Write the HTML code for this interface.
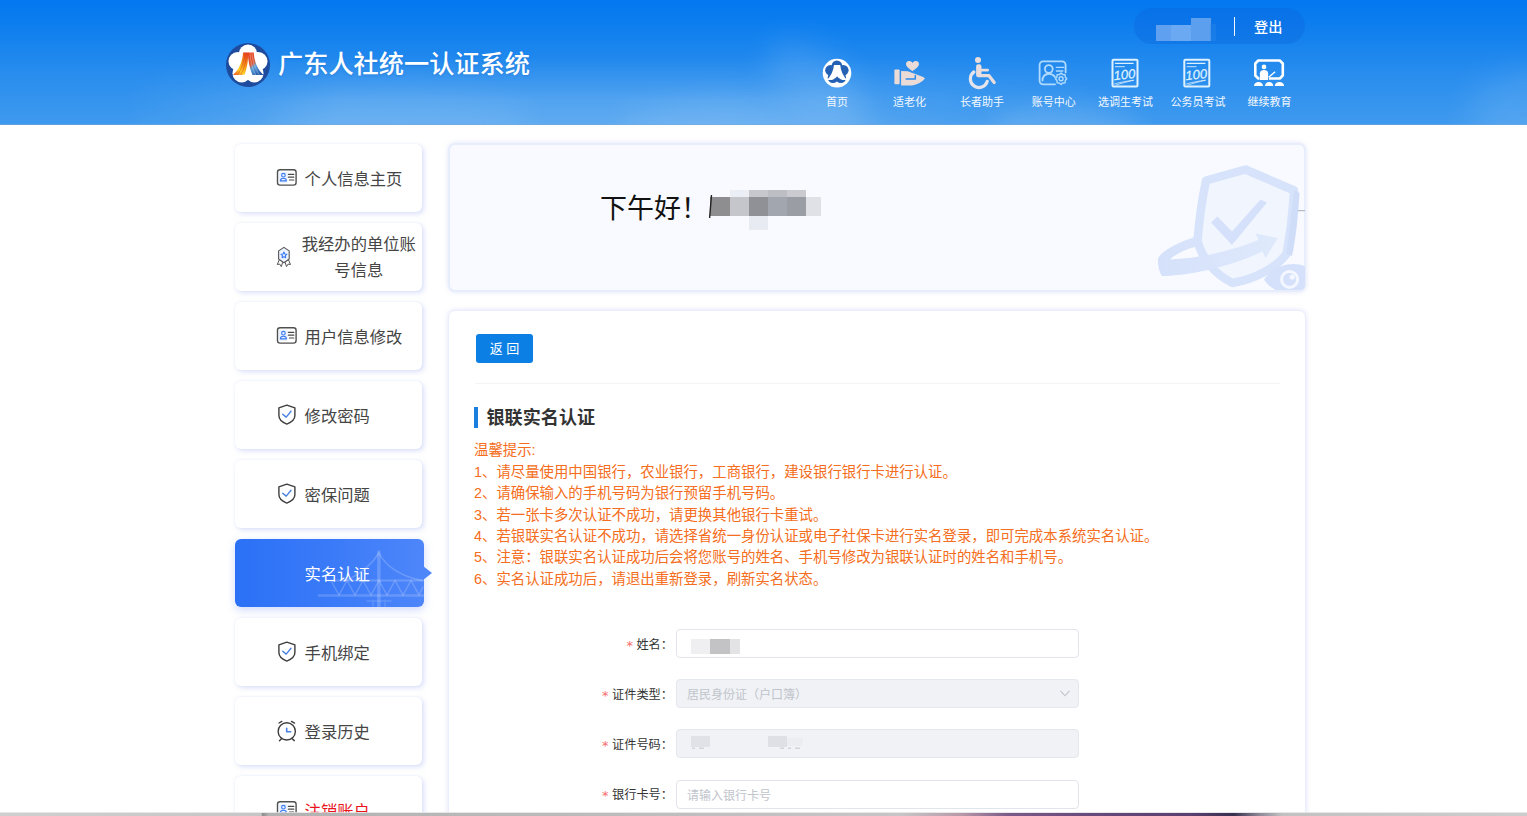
<!DOCTYPE html>
<html lang="zh-CN">
<head>
<meta charset="utf-8">
<title>广东人社统一认证系统</title>
<style>
*{box-sizing:border-box;margin:0;padding:0}
html,body{width:1527px;height:816px;overflow:hidden;background:#fff}
body{font-family:"Liberation Sans","Noto Sans CJK SC",sans-serif;color:#333;position:relative}
.abs{position:absolute}
/* header */
#hd{position:absolute;left:0;top:0;width:1527px;height:125px;overflow:hidden;
 background:linear-gradient(180deg,#0277f0 0%,#1482ee 30%,#2a8eee 62%,#3f9aee 100%)}
#hd .cloud{position:absolute;border-radius:50%;filter:blur(18px);background:#fff}
#logo{position:absolute;left:226px;top:43px;width:44px;height:44px}
#title{position:absolute;left:278px;top:46.300px;font-size:25.2px;line-height:36px;color:#fff;white-space:nowrap;letter-spacing:0;font-weight:500;text-shadow:0 1px 2px rgba(20,80,170,.25)}
#pill{position:absolute;left:1134px;top:8px;width:171px;height:36px;border-radius:18px;background:rgba(12,100,220,.36)}
#pill .sep{position:absolute;left:99.800px;top:8.5px;width:1.200px;height:19px;background:#fff;opacity:.95}
#pill .out{position:absolute;left:120px;top:8.500px;font-size:14.200px;line-height:20px;color:#fff;font-weight:500}
.mz{position:absolute}
.nl{position:absolute;top:94px;width:80px;text-align:center;font-size:11px;line-height:16px;color:#f4f8fe;white-space:nowrap}
.nav{position:absolute;top:56px;width:72px;height:60px;text-align:center}
.nav svg{position:absolute;left:20px;top:1px;width:32px;height:32px;overflow:visible}
.nav span{position:absolute;left:-10px;right:-10px;top:38px;font-size:11px;line-height:16px;color:#fff;white-space:nowrap}
/* sidebar */
.sc{position:absolute;left:235px;width:187px;height:68px;background:#fff;border-radius:6px;
 box-shadow:2px 2px 5px rgba(185,198,245,.5),0 0 2px rgba(220,226,250,.5);font-size:16.300px;color:#454545}
.sc .t{position:absolute;left:69.600px;top:22.800px;line-height:24px;white-space:nowrap}
.sc svg{position:absolute;left:0;top:0;width:188px;height:68px;overflow:visible}
.sc .t2{position:absolute;left:62.800px;top:7.900px;width:122px;text-align:center;line-height:26.500px;white-space:nowrap}
.sc.red .t{color:#e8141a}
.sc .tip{position:absolute;left:188.300px;top:26.500px;width:0;height:0;border-left:9px solid #4e86fa;border-top:7.500px solid transparent;border-bottom:7.500px solid transparent}
.sc.act{width:188.500px;background:linear-gradient(90deg,#2b71f6 0%,#3a7af8 50%,#4e86fa 100%);color:#fff;box-shadow:0 3px 8px rgba(120,150,240,.35)}
/* main */
#greet{position:absolute;left:448px;top:143px;width:858px;height:149px;background:#f8faff;border:2px solid #e8edfb;border-radius:7px;overflow:hidden;box-shadow:0 0 5px rgba(195,206,248,.5)}
#greet .g{position:absolute;left:150px;top:44px;font-size:27px;line-height:40px;color:#111;white-space:nowrap}
#panel{position:absolute;left:448px;top:310px;width:858px;height:520px;background:#fff;border:1.500px solid #eaeefc;border-radius:7px;box-shadow:0 0 5px rgba(195,206,248,.5)}
#back{position:absolute;left:476px;top:334px;width:57px;height:29px;border-radius:3px;background:#0b7fe4;color:#fff;font-size:13px;line-height:29px;text-align:center}
#hr{position:absolute;left:475px;top:383px;width:805px;height:1px;background:#f4f4f6}
#bar{position:absolute;left:474px;top:407px;width:4px;height:21px;background:#1b7fe0}
#h2{position:absolute;left:486.500px;top:404.600px;font-size:18.100px;line-height:27px;font-weight:700;color:#333;white-space:nowrap}
#tips{position:absolute;left:474px;top:440.200px;font-size:14.400px;line-height:21.43px;color:#f46d20;white-space:nowrap}
.lb{position:absolute;width:120px;text-align:right;font-size:12.200px;line-height:28px;color:#333;white-space:nowrap}
.lb i{font-style:normal;color:#f56c6c;margin-right:3.500px;font-family:'DejaVu Sans',sans-serif;font-size:13px;position:relative;top:1.600px}
.ip{position:absolute;left:676px;width:403px;height:29px;border:1px solid #e1e4eb;border-radius:4px;background:#fff;font-size:12px;line-height:30px;color:#c0c4cc;padding-left:10px;white-space:nowrap}
.ip.dis{background:#f0f2f5;border-color:#e4e7ed}
#strip{position:absolute;left:0;top:812.700px;width:1527px;height:3.300px;
 background:linear-gradient(90deg,#cfcfcf 0%,#c6c6c6 17.1%,#8c8c8c 17.2%,#b2b2b2 17.600%,#bcbcbc 40%,#c6c6c6 59%,#b898a8 63%,#7a5a88 66%,#66487a 72%,#5a4070 78%,#38304e 80.800%,#8e8a98 82.500%,#c2c2c2 84%,#cdcdcd 100%);box-shadow:0 -1px 0 rgba(225,225,228,.8)}
</style>
</head>
<body>
<div id="hd">
  <div style="position:absolute;left:120px;top:55px;width:1000px;height:70px;background:linear-gradient(180deg,rgba(255,255,255,0) 0%,rgba(255,255,255,.07) 35%,rgba(255,255,255,.15) 65%,rgba(255,255,255,.17) 100%);-webkit-mask-image:linear-gradient(90deg,transparent 0%,#000 22%,#000 60%,transparent 100%);mask-image:linear-gradient(90deg,transparent 0%,#000 22%,#000 60%,transparent 100%)"></div>
  <div class="cloud" style="left:270px;top:92px;width:260px;height:60px;opacity:.07;filter:blur(14px)"></div>
  <div class="cloud" style="left:620px;top:100px;width:260px;height:60px;opacity:.10;filter:blur(14px)"></div>
  <div class="cloud" style="left:760px;top:50px;width:110px;height:60px;opacity:.10;filter:blur(14px);transform:rotate(35deg)"></div>
  <div class="cloud" style="left:990px;top:105px;width:150px;height:50px;opacity:.13;filter:blur(12px)"></div>
  <div class="cloud" style="left:1470px;top:70px;width:120px;height:90px;opacity:.10;filter:blur(16px)"></div>
  <div style="position:absolute;left:0;top:124px;width:1527px;height:1px;background:rgba(120,165,215,.55)"></div>
</div>
<svg id="logo" viewBox="0 0 44 44">
<defs>
<linearGradient id="lg1" x1="0.9" y1="0" x2="0.1" y2="1"><stop offset="0" stop-color="#e8421c"/><stop offset=".45" stop-color="#f7a11a"/><stop offset=".7" stop-color="#ffd42a"/><stop offset="1" stop-color="#f0541c"/></linearGradient>
<linearGradient id="lg2" x1="0.2" y1="0" x2="0.8" y2="1"><stop offset="0" stop-color="#e8421c"/><stop offset=".4" stop-color="#d85a3a"/><stop offset=".55" stop-color="#5ba0d8"/><stop offset="1" stop-color="#1c4fa4"/></linearGradient>
</defs>
<circle cx="22" cy="22" r="22" fill="#1e4b9d"/>
<g fill="#fff"><circle cx="22.0" cy="10.8" r="9.200"/><circle cx="32.3" cy="18.3" r="9.200"/><circle cx="28.3" cy="30.3" r="9.200"/><circle cx="15.7" cy="30.3" r="9.200"/><circle cx="11.7" cy="18.3" r="9.200"/><circle cx="22" cy="22" r="9"/></g>
<path d="M17 9.6 H22.2 C22.4 16 21.5 24 18.6 31.8 L7 32 C13 27 16.8 18 17 9.6Z" fill="url(#lg1)"/>
<path d="M20.3 9.6C20.3 17 18.5 25 14.8 31.9M18.7 9.6C18.5 17 16.2 25 11.6 31.9" fill="none" stroke="#d9341a" stroke-opacity=".55" stroke-width=".9"/>
<path d="M21.9 9.6 H27.8 C28 18 31.5 26.5 37.6 32 L26.4 32 C23.4 25 22 17 21.9 9.6Z" fill="url(#lg2)"/>
<path d="M24 9.600C24.200 17 26 25 29.600 32M26 9.600C26.300 17 28.800 25 33.400 32" fill="none" stroke="#fff" stroke-opacity=".38" stroke-width=".8"/>
</svg>
<svg id="navsvg" width="1527" height="125" viewBox="0 0 1527 125" style="position:absolute;left:0;top:0">
<!-- home -->
<circle cx="837" cy="73.1" r="14.3" fill="#fff"/>
<g fill="#2460b4"><circle cx="836.9" cy="65.7" r="5.3"/><circle cx="843.3" cy="70.3" r="5.3"/><circle cx="840.8" cy="77.8" r="5.3"/><circle cx="833.0" cy="77.8" r="5.3"/><circle cx="830.5" cy="70.3" r="5.3"/><circle cx="836.9" cy="72.8" r="5"/></g>
<path d="M834 64.9H840.2C840.8 70.5 843.2 76 846.9 80H842.3C840 79 838.2 77.800 837.1 76.2C836 77.800 834.2 79 832 80H827.1C830.8 76 833.4 70.5 834 64.9Z" fill="#fff"/>
<!-- elder friendly -->
<g fill="#eadbd6">
<path d="M912.5 71.3c-1.600-1.500-6.500-4-6.500-7.200c0-3.500 4.500-4 6.500-1.100c2-2.900 6.500-2.400 6.500 1.100c0 3.200-4.900 5.700-6.500 7.200z"/>
<rect x="894.4" y="69.4" width="5.2" height="14.8" rx=".9"/>
<path d="M901.1 70.9L907.5 71.3C910 71.800 912 73.1 914 73.600L918.500 75.2C921 76 923.5 77 925.1 78.3C922.5 82 916.500 85.4 911 85.4H901.1Z"/>
</g>
<path d="M906.200 79H915.300V75.600" fill="none" stroke="#2f8cec" stroke-width="1.500" stroke-linejoin="round" stroke-linecap="round"/>
<!-- wheelchair -->
<g fill="#e9dedd" stroke="none">
<circle cx="978" cy="60" r="3"/>
<rect x="976.1" y="64.3" width="5.400" height="12.900" rx="2.200"/>
<rect x="980" y="68.7" width="9" height="2.700" rx="1.300"/>
</g>
<g fill="none" stroke="#e9dedd" stroke-linecap="round" stroke-linejoin="round">
<path d="M979.500 75.700H989L994.200 82.500" stroke-width="3.200"/>
<path d="M973.9 71.850A8.650 8.650 0 1 0 987.3 81.3" stroke-width="3.200" stroke="#e4e4ec"/>
</g>
<!-- account center -->
<g fill="none" stroke="#b0dbfe" stroke-width="1.800" stroke-linecap="round" stroke-linejoin="round">
<path d="M1065.600 72.400V64.900a3.500 3.500 0 0 0-3.500-3.500H1043.100a3.500 3.500 0 0 0-3.500 3.500V80.800a3.500 3.500 0 0 0 3.500 3.500H1055"/>
<circle cx="1048.800" cy="69" r="3.900"/>
<path d="M1042.500 80.600C1042.500 72.500 1052 72.300 1055 77"/>
<path d="M1056.400 67.400H1063.800M1056.400 71H1062.800" stroke-width="1.300"/>
<circle cx="1061.100" cy="78.800" r="2" stroke-width="1.400"/>
<path d="M1061.10 73.10 L1062.82 74.64 L1065.13 74.77 L1065.26 77.08 L1066.80 78.80 L1065.26 80.52 L1065.13 82.83 L1062.82 82.96 L1061.10 84.50 L1059.38 82.96 L1057.07 82.83 L1056.94 80.52 L1055.40 78.80 L1056.94 77.08 L1057.07 74.77 L1059.38 74.64Z" stroke-width="1.400"/>
</g>
<g transform="translate(1111.5,0)" stroke="#def1ff" fill="none" stroke-linecap="round">
<rect x="1" y="59.7" width="25" height="26.8" rx="1" stroke-width="2"/>
<path d="M3.9 63.3H21.6" stroke-width="1.3"/><path d="M3.9 66.7H12.8" stroke-width=".9"/>
<path d="M2.8 84C9 82.2 16 81 22.4 80.2C16 81.6 9 83.4 4.5 85.2" stroke-width=".9" opacity=".85"/>
<text x="1.800" y="79.300" transform="rotate(-6 12 74)" font-family="Liberation Sans, sans-serif" font-size="13.2" font-style="italic" fill="#def1ff" stroke="#def1ff" stroke-width=".25" textLength="22" lengthAdjust="spacingAndGlyphs">100</text>
</g>
<g transform="translate(1183.3,0)" stroke="#def1ff" fill="none" stroke-linecap="round">
<rect x="1" y="59.7" width="25" height="26.8" rx="1" stroke-width="2"/>
<path d="M3.9 63.3H21.6" stroke-width="1.3"/><path d="M3.9 66.7H12.8" stroke-width=".9"/>
<path d="M2.8 84C9 82.2 16 81 22.4 80.2C16 81.6 9 83.4 4.5 85.2" stroke-width=".9" opacity=".85"/>
<text x="1.800" y="79.300" transform="rotate(-6 12 74)" font-family="Liberation Sans, sans-serif" font-size="13.2" font-style="italic" fill="#def1ff" stroke="#def1ff" stroke-width=".25" textLength="22" lengthAdjust="spacingAndGlyphs">100</text>
</g>
<!-- continuing education -->
<g fill="none" stroke="#fff" stroke-width="2.600" stroke-linejoin="round">
<path d="M1259.500 78.500H1258.300L1255.300 75.500V63.500L1258.300 60.500H1279.800L1282.800 63.500V75.500L1279.800 78.500H1269"/>
</g>
<g fill="#fff" stroke="none">
<circle cx="1264" cy="66.900" r="2.350"/>
<path d="M1259.900 80.100V73.200c0-4.400 8.200-4.400 8.200 0V80.100z"/>
<path d="M1268.200 76.700L1274.700 71.300L1275.600 72.300L1269.100 77.700z"/>
<path d="M1254 86c0-5.400 9-5.400 9 0zM1265 86c0-5.400 8.200-5.400 8.200 0zM1274.800 86c0-5.400 9.300-5.400 9.300 0z"/>
</g>
</svg>
<div class="nl" style="left:797px">首页</div>
<div class="nl" style="left:869.5px">适老化</div>
<div class="nl" style="left:942px">长者助手</div>
<div class="nl" style="left:1013.7px">账号中心</div>
<div class="nl" style="left:1085.6px">选调生考试</div>
<div class="nl" style="left:1158px">公务员考试</div>
<div class="nl" style="left:1229.5px">继续教育</div>
<div id="title">广东人社统一认证系统</div>
<div id="pill"><div class="sep"></div><div class="out">登出</div></div>
<div class="mz" style="left:1156px;top:24.500px;width:15px;height:16.500px;background:#5fa1f0"></div>
<div class="mz" style="left:1171px;top:24.500px;width:20px;height:16.500px;background:#6ba9f2"></div>
<div class="mz" style="left:1191px;top:18px;width:19.500px;height:23px;background:#5c9fef"></div>
<div class="mz" style="left:1210px;top:24px;width:6px;height:17px;background:#2a8aec;opacity:.35"></div>

<div class="sc " style="top:144px"><svg viewBox="0 0 188 68"><g fill="none" stroke-linecap="round" stroke-linejoin="round">
<rect x="42.500" y="25.700" width="18.600" height="15.400" rx="2.600" stroke="#505050" stroke-width="1.400" fill="#fff"/><rect x="44" y="28" width="8.500" height="10.800" fill="#eaf2ff" stroke="none"/>
<path d="M53.400 30.400H58.800M53.400 33.200H58.800M54.400 36H58.800" stroke="#4a4a4a" stroke-width="1.200"/>
<circle cx="48.400" cy="31.200" r="1.800" stroke="#3a7bf0" stroke-width="1.100"/>
<path d="M45.400 36.900C45.400 33.300 51.400 33.300 51.400 36.900Z" stroke="#3a7bf0" stroke-width="1.100"/>
</g></svg><div class="t">个人信息主页</div></div>
<div class="sc" style="top:223px"><svg viewBox="0 0 188 68"><g fill="none" stroke-linecap="round" stroke-linejoin="round">
<path d="M48.900 24.400L54.200 27.900V36L48.900 39.700L43.600 36V27.900Z" stroke="#555" stroke-width="1.100" fill="#edf4ff"/>
<path d="M44.200 37L42.300 41.500L44.700 41.100L46.300 43.600L47.600 39.600M53.600 37L55.500 41.500L53.100 41.100L51.500 43.600L50.200 39.600" stroke="#555" stroke-width="1"/>
<path d="M48.900 29.100l.9 1.900 2 .3-1.500 1.400.4 2-1.800-1-1.800 1 .4-2-1.500-1.400 2-.3z" stroke="#3a7bf0" stroke-width="1.100"/>
</g></svg><div class="t2">我经办的单位账<br>号信息</div></div>
<div class="sc " style="top:302px"><svg viewBox="0 0 188 68"><g fill="none" stroke-linecap="round" stroke-linejoin="round">
<rect x="42.500" y="25.700" width="18.600" height="15.400" rx="2.600" stroke="#505050" stroke-width="1.400" fill="#fff"/><rect x="44" y="28" width="8.500" height="10.800" fill="#eaf2ff" stroke="none"/>
<path d="M53.400 30.400H58.800M53.400 33.200H58.800M54.400 36H58.800" stroke="#4a4a4a" stroke-width="1.200"/>
<circle cx="48.400" cy="31.200" r="1.800" stroke="#3a7bf0" stroke-width="1.100"/>
<path d="M45.400 36.900C45.400 33.300 51.400 33.300 51.400 36.900Z" stroke="#3a7bf0" stroke-width="1.100"/>
</g></svg><div class="t">用户信息修改</div></div>
<div class="sc " style="top:381px"><svg viewBox="0 0 188 68"><g fill="none" stroke-linecap="round" stroke-linejoin="round">
<path d="M51.800 24.100L59.900 26.900V34.600C59.900 38.600 56.200 41.500 51.800 43.100C47.400 41.500 43.900 38.600 43.900 34.600V26.900Z" stroke="#3d3d3d" stroke-width="1.400"/>
<path d="M47.700 33.200L51.200 36.100L56 30.300" stroke="#4a80e4" stroke-width="1.400"/>
</g></svg><div class="t">修改密码</div></div>
<div class="sc " style="top:460px"><svg viewBox="0 0 188 68"><g fill="none" stroke-linecap="round" stroke-linejoin="round">
<path d="M51.800 24.100L59.900 26.900V34.600C59.900 38.600 56.200 41.500 51.800 43.100C47.400 41.500 43.900 38.600 43.900 34.600V26.900Z" stroke="#3d3d3d" stroke-width="1.400"/>
<path d="M47.700 33.200L51.200 36.100L56 30.300" stroke="#4a80e4" stroke-width="1.400"/>
</g></svg><div class="t">密保问题</div></div>
<div class="sc act" style="top:539px"><svg viewBox="0 0 188 68"><g fill="none" stroke="#fff" stroke-opacity=".19" stroke-linecap="round">
<path d="M143.900 13V68" stroke-width="3.400"/>
<path d="M143.900 14C138 24 128 33 112 41.500M143.900 14C150 26 165 38 188 41.500" stroke-width="1.600"/>
<path d="M92 41.500H188" stroke-width="1.800"/>
<path d="M84 56.500H188" stroke-width="2.600" stroke-opacity=".17"/>
<path d="M96 41.500L104 56L112 41.500L120 56L128 41.500L136 56L143.900 41.500L152 56L160 41.500L168 56L176 41.500L184 56L188 48" stroke-width="1.500"/>
<path d="M138 61V68M150 61V68M132 62H156" stroke-width="1.400" stroke-opacity=".15"/>
</g></svg><div class="t">实名认证</div><div class="tip"></div></div>
<div class="sc " style="top:618px"><svg viewBox="0 0 188 68"><g fill="none" stroke-linecap="round" stroke-linejoin="round">
<path d="M51.800 24.100L59.900 26.900V34.600C59.900 38.600 56.200 41.500 51.800 43.100C47.400 41.500 43.900 38.600 43.900 34.600V26.900Z" stroke="#3d3d3d" stroke-width="1.400"/>
<path d="M47.700 33.200L51.200 36.100L56 30.300" stroke="#4a80e4" stroke-width="1.400"/>
</g></svg><div class="t">手机绑定</div></div>
<div class="sc " style="top:697px"><svg viewBox="0 0 188 68"><g fill="none" stroke-linecap="round" stroke-linejoin="round">
<circle cx="51.750" cy="34.400" r="8.600" stroke="#3d3d3d" stroke-width="1.400"/>
<path d="M44 26L46.800 24.400M56.500 24.400L59.500 26.100M46.700 41.500L44.500 43.700M56.900 41.500L59.300 43.600" stroke="#3d3d3d" stroke-width="1.400"/>
<path d="M51.700 31.200V34.800H55.700" stroke="#4a80e4" stroke-width="1.600"/>
</g></svg><div class="t">登录历史</div></div>
<div class="sc red" style="top:776px"><svg viewBox="0 0 188 68"><g fill="none" stroke-linecap="round" stroke-linejoin="round">
<rect x="42.500" y="25.700" width="18.600" height="15.400" rx="2.600" stroke="#505050" stroke-width="1.400" fill="#fff"/><rect x="44" y="28" width="8.500" height="10.800" fill="#eaf2ff" stroke="none"/>
<path d="M53.400 30.400H58.800M53.400 33.200H58.800M54.400 36H58.800" stroke="#4a4a4a" stroke-width="1.200"/>
<circle cx="48.400" cy="31.200" r="1.800" stroke="#3a7bf0" stroke-width="1.100"/>
<path d="M45.400 36.900C45.400 33.300 51.400 33.300 51.400 36.900Z" stroke="#3a7bf0" stroke-width="1.100"/>
</g></svg><div class="t">注销账户</div></div>
<div id="greet"><div class="g">下午好！</div></div>
<div id="panel"></div>
<div id="back">返 回</div>
<div id="hr"></div>
<div id="bar"></div>
<div id="h2">银联实名认证</div>
<div id="tips">温馨提示:<br>1、请尽量使用中国银行，农业银行，工商银行，建设银行银行卡进行认证。<br>2、请确保输入的手机号码为银行预留手机号码。<br>3、若一张卡多次认证不成功，请更换其他银行卡重试。<br>4、若银联实名认证不成功，请选择省统一身份认证或电子社保卡进行实名登录，即可完成本系统实名认证。<br>5、注意：银联实名认证成功后会将您账号的姓名、手机号修改为银联认证时的姓名和手机号。<br>6、实名认证成功后，请退出重新登录，刷新实名状态。</div>

<div class="lb" style="left:553px;top:630.8px"><i>*</i>姓名：</div>
<div class="ip" style="top:629px"></div>
<div class="lb" style="left:553px;top:680.8px"><i>*</i>证件类型：</div>
<div class="ip dis" style="top:679px">居民身份证（户口簿）<svg style="position:absolute;left:382px;top:9px" width="12" height="9" viewBox="0 0 12 9"><path d="M1.500 1.800L6 6.800L10.500 1.800" fill="none" stroke="#c0c4cc" stroke-width="1.100"/></svg></div>
<div class="lb" style="left:553px;top:730.8px"><i>*</i>证件号码：</div>
<div class="ip dis" style="top:729px"></div>
<div class="lb" style="left:553px;top:780.8px"><i>*</i>银行卡号：</div>
<div class="ip" style="top:780px">请输入银行卡号</div>

<svg id="art" width="1527" height="816" viewBox="0 0 1527 816" style="position:absolute;left:0;top:0;pointer-events:none">
<defs><clipPath id="gc"><rect x="450" y="145" width="855" height="145" rx="5"/></clipPath>
<linearGradient id="ag" x1="0" y1="0" x2="1" y2="0"><stop offset="0" stop-color="#d3e0fa"/><stop offset="1" stop-color="#dfe9fc"/></linearGradient></defs>
<g clip-path="url(#gc)">
<!-- shield -->
<path d="M1245.500 169.500L1206 180.500C1203 195 1199 222 1197.500 241C1203 262 1218 276 1232.500 283C1255 279 1276 268 1286.500 254C1290 235 1293 210 1294 190.500Z" fill="#f1f5fe" stroke="#d7e3fb" stroke-width="8.500" stroke-linejoin="round"/>
<path d="M1294 190.500L1299.500 193C1298.500 212 1296 238 1292 256L1286.500 254Z" fill="#d0ddf9"/>
<!-- check -->
<path d="M1211 222.500L1217.500 216.500L1232 231.500L1260.500 199.500L1267 202.500L1232 245Z" fill="#d5e1fb"/>
<!-- orbit band -->
<path d="M1196 236.500C1176 243 1160 252 1158 259C1157.500 266 1160 273.500 1162 276C1190 276 1232 266 1262.500 251.500L1265.500 258L1278 238L1255.500 233.500L1258.500 240C1232 251 1198 258.500 1170 259.500C1174 255 1184 250 1197.500 246Z" fill="url(#ag)" opacity=".96"/>
<!-- eye -->
<path d="M1264 279.500C1272 268 1286 262 1300 264.500C1304 265.500 1306 267 1307 268V292H1280C1273 289 1267 285 1264 279.500Z" fill="#d5e1fb"/>
<circle cx="1289.600" cy="279.400" r="8" fill="none" stroke="#f4f7ff" stroke-width="3"/>
<circle cx="1292.200" cy="277" r="2.600" fill="#f4f7ff"/>
<path d="M1298 210.600H1305" stroke="#b4bac8" stroke-width="1.400"/>
</g>
<!-- greeting mosaic -->
<g shape-rendering="crispEdges">
<rect x="729.600" y="190.100" width="19.600" height="6.800" fill="#eceef5"/>
<rect x="749.200" y="190.100" width="18.800" height="6.800" fill="#c6c8cd"/>
<rect x="768" y="190.100" width="18.700" height="6.800" fill="#bcbec3"/>
<rect x="786.700" y="190.100" width="19.500" height="6.800" fill="#cacbd0"/>
<rect x="710" y="196.900" width="19.600" height="19.100" fill="#8e8e90"/>
<rect x="729.600" y="196.900" width="19.600" height="19.100" fill="#c4c6cb"/>
<rect x="749.200" y="196.900" width="18.800" height="19.100" fill="#8f9196"/>
<rect x="768" y="196.900" width="18.700" height="19.100" fill="#a2a6ae"/>
<rect x="786.700" y="196.900" width="19.500" height="19.100" fill="#9a9da4"/>
<rect x="806.200" y="196.900" width="14.500" height="19.100" fill="#dfe1e6"/>
<rect x="749.200" y="216" width="18.800" height="13.600" fill="#e9ebf3"/>
</g>
<path d="M711.500 195L709.600 218" stroke="#222" stroke-width="1.400"/>
<!-- name mosaic -->
<g shape-rendering="crispEdges">
<rect x="691" y="639.300" width="19" height="14.700" fill="#efeff1"/>
<rect x="710" y="639.300" width="19.700" height="14.700" fill="#c3c3c5"/>
<rect x="729.700" y="639.300" width="10.300" height="14.700" fill="#e3e3e5"/>
<rect x="691" y="736" width="19" height="11" fill="#e1e2e8"/>
<rect x="768" y="736" width="19" height="10.500" fill="#dfe0e6"/>
<rect x="787" y="738" width="16" height="8" fill="#ecedf1"/>
</g>
<g fill="#d2d4da"><rect x="692" y="747.500" width="3" height="1.500"/><rect x="699" y="747.500" width="5" height="1.500"/><rect x="780" y="747.500" width="4" height="1.500"/><rect x="788" y="747.500" width="3" height="1.500"/><rect x="795" y="747.500" width="5" height="1.500"/></g>
</svg>
<div id="strip"></div>
</body>
</html>
